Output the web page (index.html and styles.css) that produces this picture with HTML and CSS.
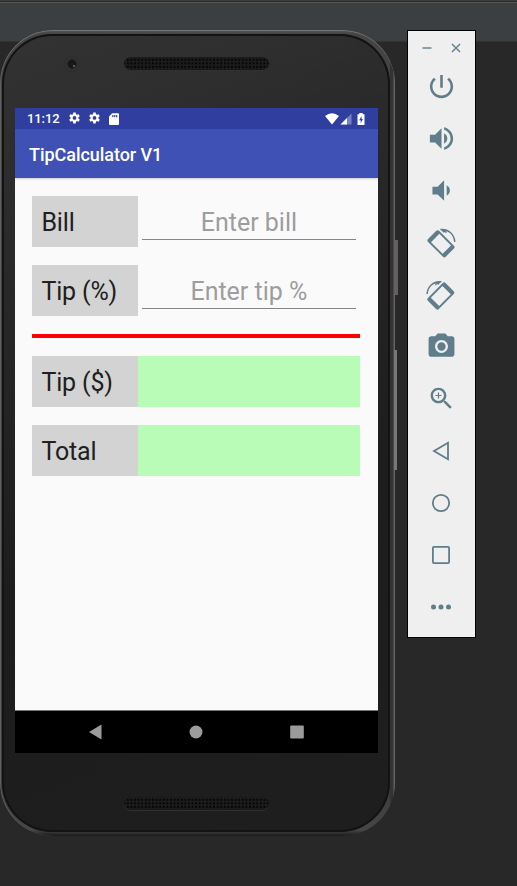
FILE: index.html
```html
<!DOCTYPE html>
<html lang="en">
<head>
<meta charset="utf-8">
<title>TipCalculator V1</title>
<link rel="stylesheet" href="styles.css">
</head>
<body>
<main class="desktop">
  <section class="phone">
    <i class="side-key power-key"></i><i class="side-key volume-key"></i>
    <div class="bezel">
      <header class="top-bezel"><i class="camera"></i><i class="speaker"></i></header>
      <div class="screen">
        <div class="status-bar">
          <span class="clock">11:12</span>
          <svg class="gear" viewBox="0 0 24 24"><use href="#gear"/></svg>
          <svg class="gear" viewBox="0 0 24 24"><use href="#gear"/></svg>
          <svg class="sd" viewBox="0 0 10 12"><path fill-rule="evenodd" d="M3.2.3H9Q10 .3 10 1.3V11Q10 12 9 12H1Q0 12 0 11V3.6ZM3.3 2V4.3H4.5V2ZM5.2 2V4.3H6.4V2ZM7.1 2V4.3H8.3V2Z"/></svg>
          <span class="system">
            <svg class="wifi" viewBox="0 0 14 12"><path d="M0 3Q7-2.4 14 3L7 11.5Z"/></svg>
            <svg class="signal" viewBox="0 0 12 12"><path opacity=".35" d="M11.5.5V11.5H.5Z"/><path d="M7 5V11.5H.5Z"/></svg>
            <svg class="battery" viewBox="0 0 8 12"><path fill-rule="evenodd" d="M2.3 0H5.7V1.3H7.5V12H.5V1.3H2.3ZM4.5 3 2.2 7.2H3.7V10.3L5.9 6H4.5Z"/></svg>
          </span>
        </div>
        <h1 class="app-bar">TipCalculator V1</h1>
        <div class="content">
          <div class="row"><span class="label">Bill</span><span class="field">Enter bill</span></div>
          <div class="row"><span class="label">Tip (%)</span><span class="field">Enter tip %</span></div>
          <div class="divider"></div>
          <div class="row"><span class="label">Tip ($)</span><span class="result"></span></div>
          <div class="row"><span class="label">Total</span><span class="result"></span></div>
        </div>
        <nav class="nav-bar">
          <svg viewBox="0 0 16 16"><path d="M1 8 13.5.6V15.4Z"/></svg>
          <svg viewBox="0 0 16 16"><circle cx="8" cy="8" r="6.5"/></svg>
          <svg viewBox="0 0 16 16"><rect x="1.2" y="1.5" width="13.6" height="13" rx="1"/></svg>
        </nav>
      </div>
      <footer class="bottom-bezel"><i class="speaker"></i></footer>
    </div>
  </section>

  <aside class="toolbar">
    <div class="window-buttons">
      <svg viewBox="0 0 10 10"><path d="M.5 5H9.5"/></svg>
      <svg viewBox="0 0 10 10"><path d="M1 1 9 9M9 1 1 9"/></svg>
    </div>
    <div class="tool"><svg viewBox="0 0 24 24"><path d="M13 3h-2v10h2V3zm4.830 2.170-1.420 1.420C17.990 7.860 19 9.810 19 12c0 3.870-3.130 7-7 7s-7-3.130-7-7c0-2.190 1.010-4.140 2.580-5.420L6.170 5.170C4.230 6.820 3 9.260 3 12c0 4.970 4.030 9 9 9s9-4.030 9-9c0-2.740-1.230-5.180-3.170-6.830z"/></svg></div>
    <div class="tool"><svg viewBox="0 0 24 24"><path d="M3 9v6h4l5 5V4L7 9H3zm13.500 3c0-1.770-1.020-3.290-2.500-4.030v8.050c1.480-.73 2.500-2.250 2.500-4.020zM14 3.230v2.060c2.890.86 5 3.540 5 6.710s-2.110 5.850-5 6.710v2.060c4.010-.91 7-4.490 7-8.770s-2.990-7.860-7-8.770z"/></svg></div>
    <div class="tool"><svg viewBox="0 0 24 24"><path d="M18.500 12c0-1.770-1.020-3.290-2.500-4.030v8.050c1.480-.73 2.500-2.250 2.500-4.020zM5 9v6h4l5 5V4L9 9H5z"/></svg></div>
    <div class="tool"><svg class="wide" viewBox="0 0 32 32"><use href="#rotate"/></svg></div>
    <div class="tool"><svg class="wide" viewBox="0 0 32 32"><use href="#rotate" transform="matrix(-1 0 0 1 31.800 .2)"/></svg></div>
    <div class="tool"><svg viewBox="0 0 24 24"><circle cx="12" cy="12" r="3.200"/><path d="M9 2 7.170 4H4c-1.100 0-2 .9-2 2v12c0 1.100.9 2 2 2h16c1.100 0 2-.9 2-2V6c0-1.100-.9-2-2-2h-3.170L15 2H9zm3 15c-2.760 0-5-2.240-5-5s2.240-5 5-5 5 2.240 5 5-2.240 5-5 5z"/></svg></div>
    <div class="tool"><svg class="zoom" viewBox="0 0 24 24"><path d="M15.500 14h-.79l-.28-.27C15.410 12.590 16 11.110 16 9.500 16 5.910 13.090 3 9.500 3S3 5.910 3 9.500 5.910 16 9.500 16c1.610 0 3.090-.59 4.230-1.570l.27.28v.79l5 4.990L20.490 19l-4.990-5zm-6 0C7.010 14 5 11.990 5 9.500S7.010 5 9.500 5 14 7.010 14 9.500 11.990 14 9.500 14zm2.500-4h-2v2H9v-2H7V9h2V7h1v2h2v1z"/></svg></div>
    <div class="tool line"><svg class="wide" viewBox="0 0 32 32"><path d="M9 16 23 7.800V24.200Z"/></svg></div>
    <div class="tool line"><svg class="wide" viewBox="0 0 32 32"><circle cx="16" cy="16" r="8.200"/></svg></div>
    <div class="tool line"><svg class="wide" viewBox="0 0 32 32"><rect x="7.900" y="7.900" width="16.200" height="16.200" rx="1"/></svg></div>
    <div class="tool"><svg class="wide" viewBox="0 0 32 32"><circle cx="8.500" cy="16" r="2.500"/><circle cx="16" cy="16" r="2.500"/><circle cx="23.500" cy="16" r="2.500"/></svg></div>
  </aside>
</main>

<svg class="defs" width="0" height="0">
  <defs>
    <path id="gear" fill-rule="evenodd" d="M9.800 1h4.400l.5 3.100 1.900 1.100 3-1.200 2.200 3.900-2.500 1.900v2.400l2.500 1.900-2.200 3.900-3-1.200-1.900 1.100-.5 3.100H9.800l-.5-3.100-1.900-1.100-3 1.200-2.200-3.900 2.500-1.900V9.800l-2.500-1.900 2.200-3.900 3 1.200 1.900-1.100ZM12 7.500a3.500 3.500 0 1 0 0 7 3.500 3.500 0 0 0 0-7Z"/>
    <g id="rotate">
      <path fill-rule="evenodd" transform="translate(16 16.800) rotate(45)" d="M-10.500-7.800H10.500Q12.500-7.800 12.500-5.800V5.800Q12.500 7.800 10.500 7.800H-10.500Q-12.500 7.800-12.500 5.800V-5.800Q-12.500-7.800-10.500-7.800ZM-8.200-5.900V5.900H8.200V-5.900Z"/>
      <path fill="none" stroke="#607d8b" stroke-width="1.500" d="M15.500 2.600C23.500 2 29 7 29.800 14.800"/>
      <path d="M15.300 1.900 21.500 2.800V6.500L19.700 4.900 18.600 5.800Z"/>
    </g>
  </defs>
</svg>
</body>
</html>
```
FILE: styles.css
```css
* { box-sizing: border-box; }

body {
  margin: 0;
  font-family: Roboto, "Liberation Sans", sans-serif;
}

.defs { position: absolute; }

.desktop {
  display: flex;
  align-items: flex-start;
  gap: 12px;
  height: 886px;
  padding-top: 30px;
  overflow: hidden;
  background: linear-gradient(#3c3f41 0 1px, #292b2c 1px 2px, #5b5650 2px 3px, #3c3f41 3px 41px, #323232 41px 42px, #282828 42px);
}

/* Device frame */
.phone {
  position: relative;
  width: 395px;
  height: 806px;
  padding: 4px 5px 4px 2px;
  border-radius: 53px;
  background: linear-gradient(90deg, transparent 390px, #353233 390px 393px, #656364 394px), linear-gradient(#555 0, #444 4px, #3c3c3d 760px, #464646 800px, #191919 806px);
  box-shadow: inset 0 1px 0 #747474, inset 1px 0 0 #606060;
}

.bezel {
  height: 798px;
  padding: 0 10px 0 13px;
  border-radius: 50px;
  background: linear-gradient(160deg, #333334 0, #292929 25%, #1d1d1e 60%, #1e1e1e 100%);
  box-shadow: inset 0 0 0 2px #131313;
}

.side-key {
  position: absolute;
  left: 394px;
  background: #626061;
}

.power-key { top: 210px; width: 4px; height: 55px; }
.volume-key { top: 320px; width: 3px; height: 120px; background: #777; }

.top-bezel {
  display: flex;
  align-items: center;
  gap: 44px;
  height: 74px;
  padding: 0 0 15px 49px;
}

.camera {
  width: 16px;
  height: 16px;
  border-radius: 50%;
  background: radial-gradient(circle at 10px 10px, #705064 0 1px, transparent 1.5px), radial-gradient(circle, #19171c 0 4px, #303030 5px 7px, #2a2a2a 8px);
}

.speaker {
  width: 145px;
  height: 13px;
  border-radius: 7px;
  background: radial-gradient(circle, #050505 0 .8px, transparent 1.2px) 2px 1px / 3.6px 3.6px, #1b1b1b;
  box-shadow: 0 1px 0 #303030;
}

.bottom-bezel {
  display: flex;
  padding: 44px 0 0 109px;
}

/* App screen */
.screen {
  display: flex;
  flex-direction: column;
  width: 363px;
  height: 645px;
  background: #fafafa;
}

.status-bar {
  display: flex;
  align-items: center;
  height: 21px;
  padding: 0 13px 0 12px;
  color: #fff;
  background: #303f9f;
  font-size: 13px;
  font-weight: 500;
}

.status-bar svg { fill: #fff; }
.clock { width: 41px; letter-spacing: -.1px; }
.gear { width: 13px; height: 13px; margin-right: 6.5px; }
.sd { width: 10px; height: 12px; margin-left: 1.5px; }
.system { display: flex; margin-left: auto; }
.wifi { width: 14px; height: 12px; margin-right: 1px; }
.signal { width: 12px; height: 12px; margin-right: 5px; }
.battery { width: 8px; height: 12px; }

.app-bar {
  z-index: 1;
  height: 49px;
  margin: 0;
  padding-left: 14px;
  color: #fff;
  background: #3f51b5;
  box-shadow: 0 1px 2px rgba(0, 0, 0, .18);
  font-size: 18px;
  font-weight: 500;
  letter-spacing: -.05px;
  line-height: 51px;
}

.content {
  display: flex;
  flex: 1;
  flex-direction: column;
  gap: 18px;
  padding: 18px 18px 0 17.4px;
}

.row { display: flex; height: 51px; font-size: 25px; }

.label {
  width: 106px;
  padding-left: 9px;
  color: #202020;
  background: #d3d3d3;
  letter-spacing: -.15px;
  line-height: 54px;
}

.field {
  flex: 1;
  height: 44px;
  margin: 0 4px 0 3.4px;
  border-bottom: 1px solid #858585;
  color: #9d9d9d;
  line-height: 54px;
  text-align: center;
}

.result { flex: 1; background: #b9fcb7; }
.divider { height: 4px; background: #f00; }

.nav-bar {
  display: flex;
  align-items: center;
  justify-content: center;
  gap: 84.5px;
  height: 43px;
  padding: 0 1px 1px 0;
  border-top: 1px solid #777;
  background: #000;
}

.nav-bar svg { width: 16px; height: 16px; fill: #9b9b9b; }

/* Emulator controls */
.toolbar {
  width: 69px;
  height: 608px;
  padding-right: 1px;
  border: 1px solid #000;
  background: #efefef;
}

.window-buttons {
  display: flex;
  justify-content: center;
  gap: 19px;
  height: 29.6px;
  padding-top: 11.5px;
}

.window-buttons svg {
  width: 10px;
  height: 10px;
  fill: none;
  stroke: #607d8b;
  stroke-width: 1.4;
}

.tool {
  display: flex;
  align-items: center;
  justify-content: center;
  height: 52px;
}

.tool svg { width: 31px; height: 31px; fill: #607d8b; }
.tool .wide { width: 32px; height: 32px; }
.tool .zoom { width: 29px; height: 29px; }
.line svg { fill: none; stroke: #607d8b; stroke-width: 1.8; }
```
